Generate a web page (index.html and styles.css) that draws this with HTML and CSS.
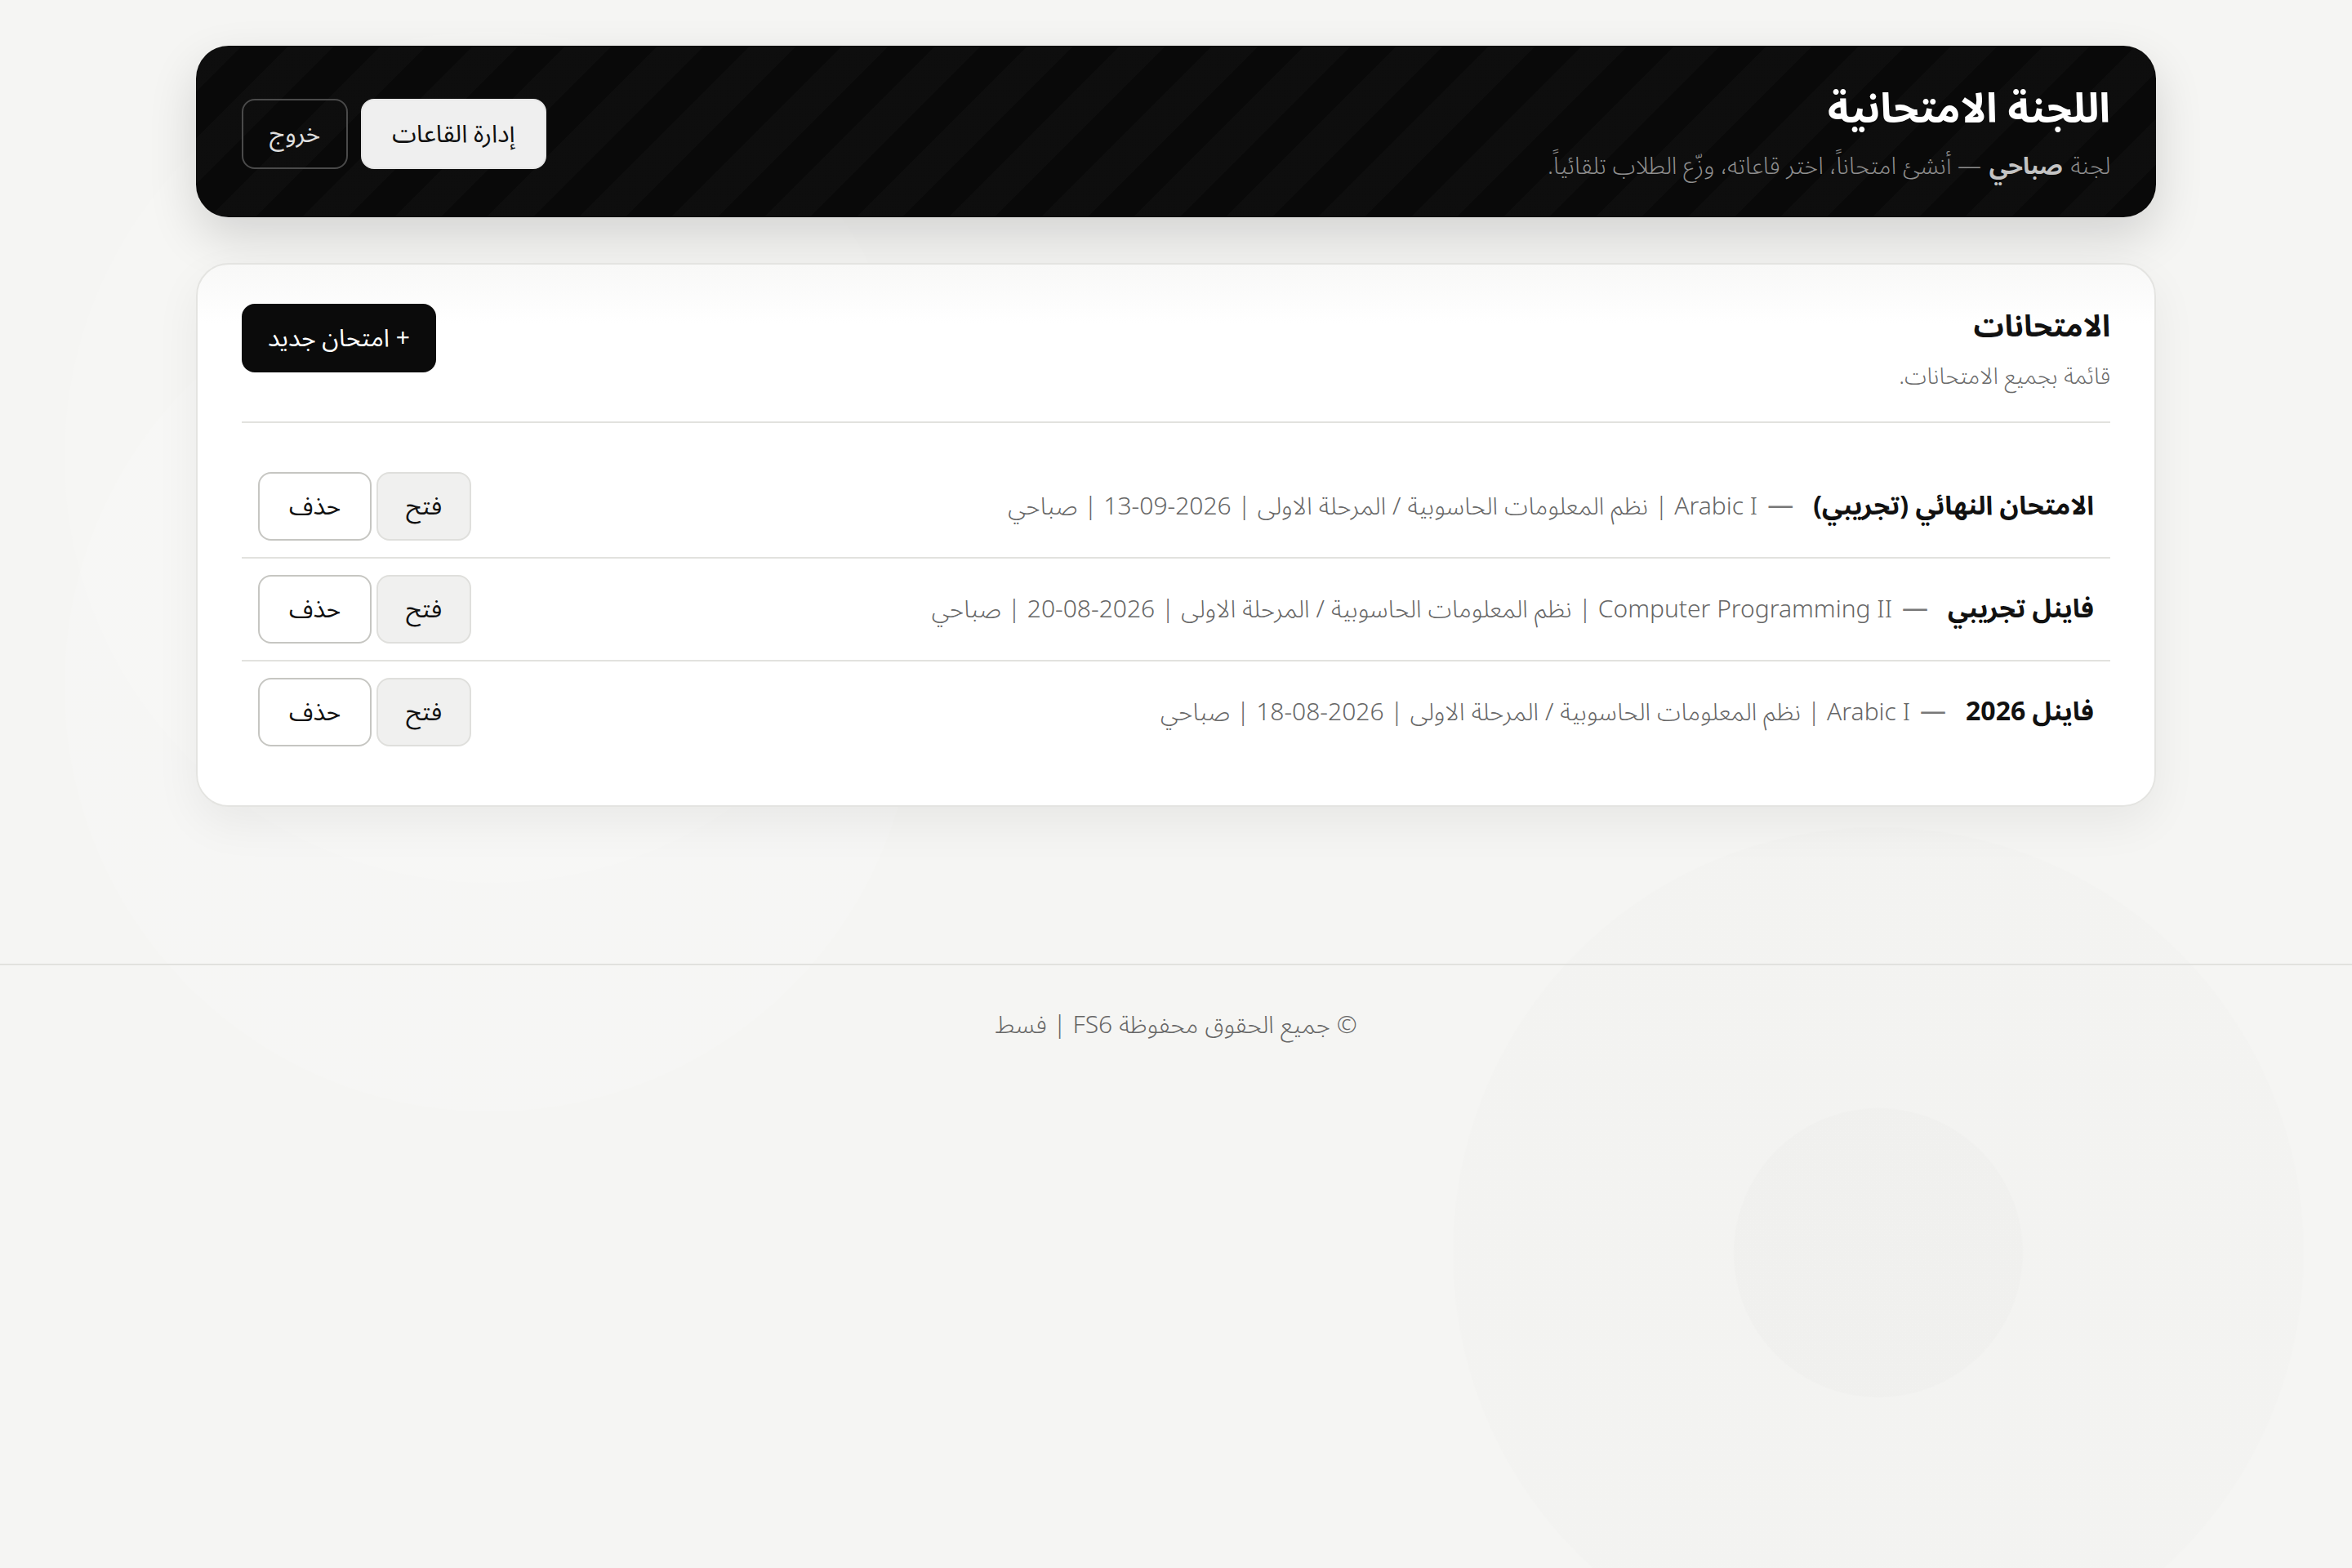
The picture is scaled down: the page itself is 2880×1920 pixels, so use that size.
FILE: index.html
```html
<!DOCTYPE html>
<html lang="ar" dir="rtl">
<head>
<meta charset="utf-8">
<title>اللجنة الامتحانية</title>
<link rel="stylesheet" href="styles.css">
</head>
<body>
<div class="page">
  <main class="container">
    <header class="hero">
      <div class="hero-text">
        <h1 class="hero-title">اللجنة الامتحانية</h1>
        <p class="hero-sub"><span>لجنة</span> <b>صباحي</b> <span>— أنشئ امتحاناً، اختر قاعاته، وزّع الطلاب تلقائياً.</span></p>
      </div>
      <div class="hero-actions">
        <button class="btn btn-light">إدارة القاعات</button>
        <button class="btn btn-ghost">خروج</button>
      </div>
    </header>

    <section class="card">
      <div class="card-head">
        <div>
          <h2 class="card-title">الامتحانات</h2>
          <p class="card-sub">قائمة بجميع الامتحانات.</p>
        </div>
        <button class="btn btn-dark">+ امتحان جديد</button>
      </div>

      <ul class="exam-list">
        <li class="exam-row">
          <div class="exam-info"><span class="exam-name">الامتحان النهائي (تجريبي)</span><span class="exam-sep">—</span><span class="exam-meta">Arabic I | نظم المعلومات الحاسوبية / المرحلة الاولى | 2026-09-13 | صباحي</span></div>
          <div class="exam-actions">
            <button class="btn btn-soft">فتح</button>
            <button class="btn btn-outline">حذف</button>
          </div>
        </li>
        <li class="exam-row">
          <div class="exam-info"><span class="exam-name">فاينل تجريبي</span><span class="exam-sep">—</span><span class="exam-meta">Computer Programming II | نظم المعلومات الحاسوبية / المرحلة الاولى | 2026-08-20 | صباحي</span></div>
          <div class="exam-actions">
            <button class="btn btn-soft">فتح</button>
            <button class="btn btn-outline">حذف</button>
          </div>
        </li>
        <li class="exam-row">
          <div class="exam-info"><span class="exam-name">فاينل 2026</span><span class="exam-sep">—</span><span class="exam-meta">Arabic I | نظم المعلومات الحاسوبية / المرحلة الاولى | 2026-08-18 | صباحي</span></div>
          <div class="exam-actions">
            <button class="btn btn-soft">فتح</button>
            <button class="btn btn-outline">حذف</button>
          </div>
        </li>
      </ul>
    </section>
  </main>

  <footer class="footer">© جميع الحقوق محفوظة FS6 | فسط</footer>
</div>
</body>
</html>
```

FILE: styles.css
```css
html {
  zoom: 2;
}

body {
  margin: 0;
  min-height: 960px;
  font-family: "Noto Sans Arabic", "Noto Kufi Arabic", "DejaVu Sans", sans-serif;
  color: #111;
  background-color: #f5f5f3;
  background-image:
    radial-gradient(circle at 1150px 767px, rgba(0,0,0,0.012) 0 88px, transparent 89px),
    radial-gradient(circle at 1150px 767px, rgba(0,0,0,0.008) 0 260px, transparent 261px),
    radial-gradient(circle at 300px 420px, rgba(255,255,255,0.14) 0 260px, transparent 261px),
    radial-gradient(circle at 300px 280px, rgba(255,255,255,0.12) 0 260px, transparent 261px);
}

.page {
  min-height: 960px;
}

.container {
  width: 1200px;
  margin: 0 auto;
  padding-top: 28px;
}

.hero {
  display: flex;
  align-items: center;
  justify-content: space-between;
  padding: 21px 28px 18px;
  border-radius: 20px;
  background-color: #090909;
  background-image: repeating-linear-gradient(135deg, rgba(255,255,255,0.02) 0 20px, transparent 20px 40px);
  box-shadow: 0 12px 30px rgba(0,0,0,0.14);
  color: #fff;
}

.hero-title {
  margin: 0;
  font-size: 25px;
  line-height: 36px;
  font-weight: 700;
}

.hero-sub {
  margin: 4px 0 0;
  font-size: 14.5px;
  line-height: 26px;
  color: #8f8f8f;
  font-weight: 300;
}

.hero-sub b {
  margin: 0 1px;
  color: #c4c4c4;
  font-weight: 700;
}

.hero-actions {
  display: flex;
  gap: 8px;
}

.btn {
  font-family: inherit;
  font-size: 15px;
  height: 42px;
  padding: 0 18px;
  border-radius: 8px;
  border: 1px solid transparent;
  cursor: pointer;
  white-space: nowrap;
}

.btn-light {
  height: 43px;
  background: #efefef;
  border-color: #e6e6e6;
  color: #111;
}

.btn-ghost {
  height: 43px;
  padding: 0 16px;
  background: transparent;
  border-color: #4a4a4a;
  color: #dedede;
}

.btn-dark {
  margin-top: 1px;
  padding: 0 15px;
  background: #0b0b0b;
  color: #fff;
}

.btn-soft {
  padding: 0 17px;
  background: #f0f0ef;
  border-color: #dfdfdc;
  color: #111;
}

.btn-outline {
  padding: 0 18px;
  background: #fff;
  border-color: #c6c6c2;
  color: #111;
}

.card {
  margin-top: 28px;
  padding: 23px 27px 26px;
  border: 1px solid #e4e4e1;
  border-radius: 20px;
  background: linear-gradient(180deg, #f8f8f7 0, #fff 36px);
  box-shadow: 0 10px 28px rgba(0,0,0,0.06);
}

.card-head {
  display: flex;
  align-items: flex-start;
  justify-content: space-between;
  padding-bottom: 14px;
  border-bottom: 1px solid #e2e2de;
}

.card-title {
  margin: 0;
  font-size: 18.5px;
  line-height: 30px;
  font-weight: 700;
}

.card-sub {
  margin: 3px 0 0;
  font-size: 14px;
  line-height: 26px;
  color: #6a6a6a;
  font-weight: 300;
}

.exam-list {
  list-style: none;
  margin: 20px 0 0;
  padding: 0;
}

.exam-row {
  display: flex;
  align-items: center;
  justify-content: space-between;
  padding: 10px;
  border-bottom: 1px solid #e2e2de;
}

.exam-row:last-child {
  border-bottom: none;
}

.exam-info {
  font-size: 16px;
  line-height: 26px;
}

.exam-name {
  font-weight: 700;
  color: #111;
}

.exam-sep {
  margin: 0 12px 0 6px;
  color: #777;
}

.exam-meta {
  font-size: 15px;
  color: #666;
  font-weight: 300;
}

.exam-actions {
  display: flex;
  gap: 3px;
}

.footer {
  margin-top: 96px;
  border-top: 1px solid #e1e1de;
  padding: 25px 0;
  text-align: center;
  font-size: 15px;
  line-height: 24px;
  color: #666;
  font-weight: 300;
}
```
